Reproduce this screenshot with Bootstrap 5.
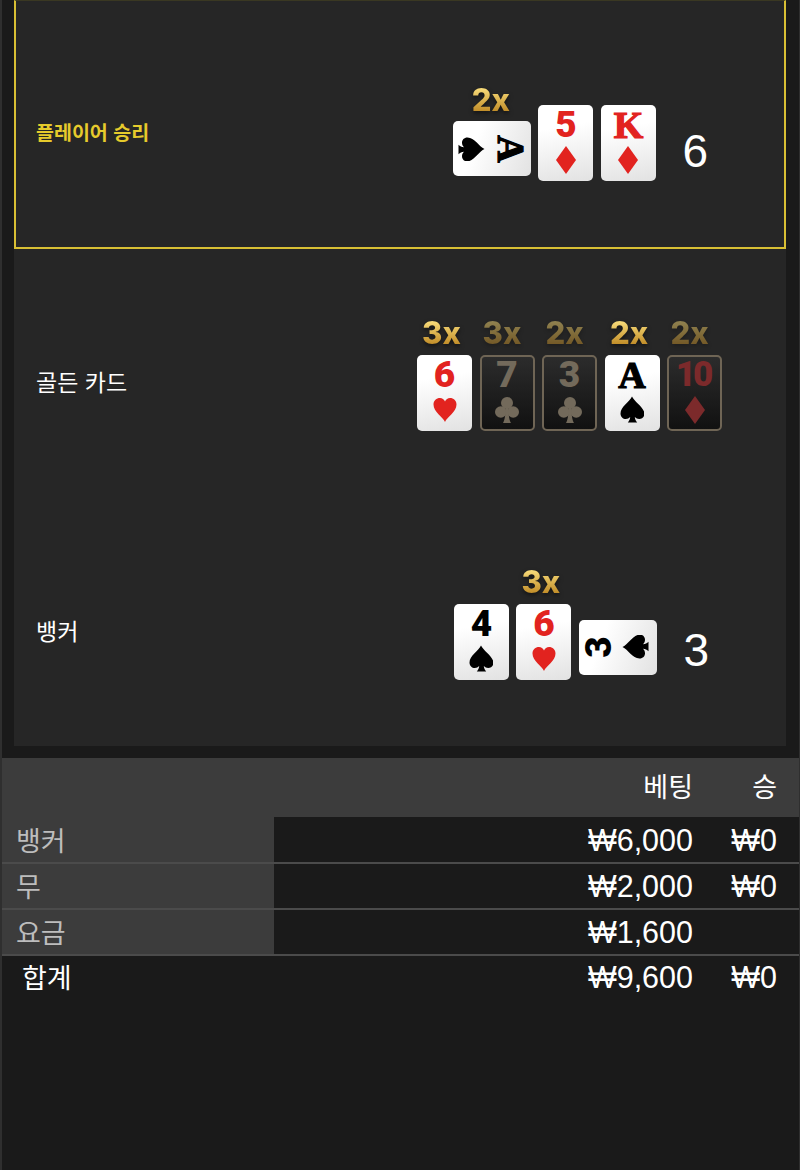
<!DOCTYPE html>
<html lang="ko">
<head>
<meta charset="utf-8">
<title>결과</title>
<link rel="stylesheet" href="https://cdn.jsdelivr.net/npm/bootstrap@5.3.0/dist/css/bootstrap.min.css">
<style>
html,body{height:100%;}
body{background:#1a1a1a;font-family:"Liberation Sans","Noto Sans CJK KR",sans-serif;overflow:hidden;}
.shell{height:1170px;border-left:2px solid #2f2f2f;border-right:1px solid #2f2f2f;}
.board{padding:0 13px 0 12px;height:758px;}
.hand-panel{background:#262626;height:249px;}
.hand-panel.won{border:2px solid #d8bf34;border-top:1px solid #3a3822;height:249px;padding-bottom:2px;}
.hand-panel.won+.hand-panel{height:248px;}
.hand-title{padding:18px 0 0 22px;color:#fff;font-size:23px;font-family:"Noto Sans CJK KR",sans-serif;line-height:1.2;}
.won .hand-title{padding-left:20px;color:#e6cb2c;font-size:19.500px;font-weight:700;}
.hand-cards{padding-top:40px;gap:7.500px;}
.r78{padding-right:78px;}
.won.r78{padding-right:76px;}
.r77{padding-right:77px;}
.r64{padding-right:64px;}
.playing-card{position:relative;width:55px;height:76px;border-radius:5px;background:linear-gradient(170deg,#fff 30%,#e2e2e2);display:flex;flex-direction:column;align-items:center;}
.playing-card.flat{width:78px;height:55px;margin-bottom:5px;background:linear-gradient(110deg,#fff 30%,#e2e2e2);flex-direction:row;justify-content:center;align-items:center;gap:14px;}
.flat.cw .rank,.flat.cw .pip{transform:rotate(90deg);}
.flat.ccw .rank,.flat.ccw .pip{transform:rotate(-90deg);}
.flat .rank{margin:0;}
.flat .pip{margin:0;}
.playing-card.dim{background:linear-gradient(#2c2c2c,#111);border:2px solid #6f6555;}
.rank{font:900 37px/1 Roboto,sans-serif;height:28px;line-height:28px;margin-top:6px;color:#000;}
.rank.slab{font-family:"Liberation Serif",serif;font-weight:700;font-size:38px;-webkit-text-stroke:1.200px currentColor;}
.rank.tens{letter-spacing:-3px;font-size:35px;margin-left:-3px;}
.pip{width:24px;height:28px;margin-top:7px;display:block;fill:#000;}
.is-red .rank{color:#e2231f;}
.is-red .pip{fill:#e2231f;}
.dim .rank{color:#736a5b;margin-top:4px;}
.dim .pip{fill:#736a5b;}
.dim.is-red .rank{color:#7c2a2b;}
.dim.is-red .pip{fill:#7c2a2b;}
.mult{position:absolute;left:-3px;right:3px;bottom:100%;margin-bottom:9px;text-align:center;font:800 31px/26px Inter,sans-serif;background:linear-gradient(#fbe07e,#bd8722);-webkit-background-clip:text;background-clip:text;color:transparent;filter:drop-shadow(0 2px 2px rgba(0,0,0,.5));}
.mult.off{opacity:.5;left:-5px;right:5px;margin-bottom:11px;}
.flat .mult{left:-1px;right:1px;margin-bottom:8px;}
.score{color:#fff;font-size:46px;line-height:1;margin:0 0 7px 19px;}
.bets{width:100%;table-layout:fixed;font-size:30.500px;color:#fff;border-collapse:separate;border-spacing:0;}
.bets th,.bets td{font-weight:400;padding:0;vertical-align:middle;line-height:44px;}
.bets thead tr{height:59px;background:#3c3c3c;}
.bets thead th{font-family:"Noto Sans CJK KR",sans-serif;font-size:27px;padding-bottom:3px;}
.bets tbody tr{height:46px;}
.bets tbody tr.line:first-child{height:47px;}
.bets tbody tr.line td,.bets tbody tr.line th{border-bottom:2px solid #4b4b4b;}
.bets tbody tr.line th{background:#3c3c3c;color:#bdbdbd;padding-left:14px;}
.bets th{font-family:"Noto Sans CJK KR",sans-serif;font-size:27px;}
.bets .sum-row th{padding-left:20px;color:#fff;}
.bets .sum-row>*{line-height:42px;vertical-align:top;}
.col-name{width:272px;}
.col-bet{width:130px;}
.col-win{width:106px;}
.bets .c-win{padding-right:22px;}
</style>
</head>
<body>
<svg width="0" height="0" class="d-block" aria-hidden="true">
<symbol id="s-spade" viewBox="0 0 24 28"><path d="M12 .5C9.500 6 .5 10.500 .5 17.500c0 3.500 2.500 5.500 5.300 5.500 1.700 0 3.200-.7 4.400-2-.2 2.300-1 4-2.400 5.500h9.400c-1.400-1.500-2.200-3.200-2.400-5.500 1.200 1.300 2.700 2 4.400 2 2.800 0 5.300-2 5.300-5.500C23.500 10.500 14.500 6 12 .5z"/></symbol>
<symbol id="s-heart" viewBox="0 0 24 28"><path d="M12 26C10 21 .5 16 .5 8.500 .5 4.500 3.500 2 7 2c2.200 0 4 1.200 5 3.500 1-2.300 2.800-3.500 5-3.500 3.500 0 6.500 2.500 6.500 6.500C23.500 16 14 21 12 26z"/></symbol>
<symbol id="s-diamond" viewBox="0 0 24 28"><path d="M12 0l10 14-10 14L2 14z"/></symbol>
<symbol id="s-club" viewBox="0 0 24 28"><circle cx="12" cy="7" r="6"/><circle cx="5.800" cy="16" r="5.800"/><circle cx="18.200" cy="16" r="5.800"/><path d="M10.500 12c0 8-1 12.500-2.500 15h8c-1.500-2.500-2.500-7-2.500-15z"/></symbol>
</svg>
<div class="shell d-flex flex-column">
  <div class="board">
    <section class="hand-panel won r78 d-flex align-items-center justify-content-between">
      <div class="hand-title">플레이어 승리</div>
      <div class="hand-cards d-flex align-items-end">
        <div class="playing-card flat cw"><span class="mult">2x</span><svg class="pip"><use href="#s-spade"/></svg><span class="rank slab">A</span></div>
        <div class="playing-card is-red"><span class="rank">5</span><svg class="pip"><use href="#s-diamond"/></svg></div>
        <div class="playing-card is-red"><span class="rank slab">K</span><svg class="pip"><use href="#s-diamond"/></svg></div>
        <div class="score">6</div>
      </div>
    </section>
    <section class="hand-panel r64 d-flex align-items-center justify-content-between">
      <div class="hand-title">골든 카드</div>
      <div class="hand-cards d-flex align-items-end">
        <div class="playing-card is-red"><span class="mult">3x</span><span class="rank">6</span><svg class="pip"><use href="#s-heart"/></svg></div>
        <div class="playing-card dim"><span class="mult off">3x</span><span class="rank">7</span><svg class="pip"><use href="#s-club"/></svg></div>
        <div class="playing-card dim"><span class="mult off">2x</span><span class="rank">3</span><svg class="pip"><use href="#s-club"/></svg></div>
        <div class="playing-card"><span class="mult">2x</span><span class="rank slab">A</span><svg class="pip"><use href="#s-spade"/></svg></div>
        <div class="playing-card dim is-red"><span class="mult off">2x</span><span class="rank tens">10</span><svg class="pip"><use href="#s-diamond"/></svg></div>
      </div>
    </section>
    <section class="hand-panel r77 d-flex align-items-center justify-content-between">
      <div class="hand-title">뱅커</div>
      <div class="hand-cards d-flex align-items-end">
        <div class="playing-card"><span class="rank">4</span><svg class="pip"><use href="#s-spade"/></svg></div>
        <div class="playing-card is-red"><span class="mult">3x</span><span class="rank">6</span><svg class="pip"><use href="#s-heart"/></svg></div>
        <div class="playing-card flat ccw"><span class="rank">3</span><svg class="pip"><use href="#s-spade"/></svg></div>
        <div class="score">3</div>
      </div>
    </section>
  </div>
  <table class="bets">
    <colgroup><col class="col-name"><col><col class="col-bet"><col class="col-win"></colgroup>
    <thead><tr><th></th><th></th><th class="c-bet text-end">베팅</th><th class="c-win text-end">승</th></tr></thead>
    <tbody>
      <tr class="line"><th>뱅커</th><td></td><td class="c-bet text-end">₩6,000</td><td class="c-win text-end">₩0</td></tr>
      <tr class="line"><th>무</th><td></td><td class="c-bet text-end">₩2,000</td><td class="c-win text-end">₩0</td></tr>
      <tr class="line"><th>요금</th><td></td><td class="c-bet text-end">₩1,600</td><td class="c-win"></td></tr>
      <tr class="sum-row"><th>합계</th><td></td><td class="c-bet text-end">₩9,600</td><td class="c-win text-end">₩0</td></tr>
    </tbody>
  </table>
</div>
<script src="https://cdn.jsdelivr.net/npm/bootstrap@5.3.0/dist/js/bootstrap.bundle.min.js"></script>
</body>
</html>
